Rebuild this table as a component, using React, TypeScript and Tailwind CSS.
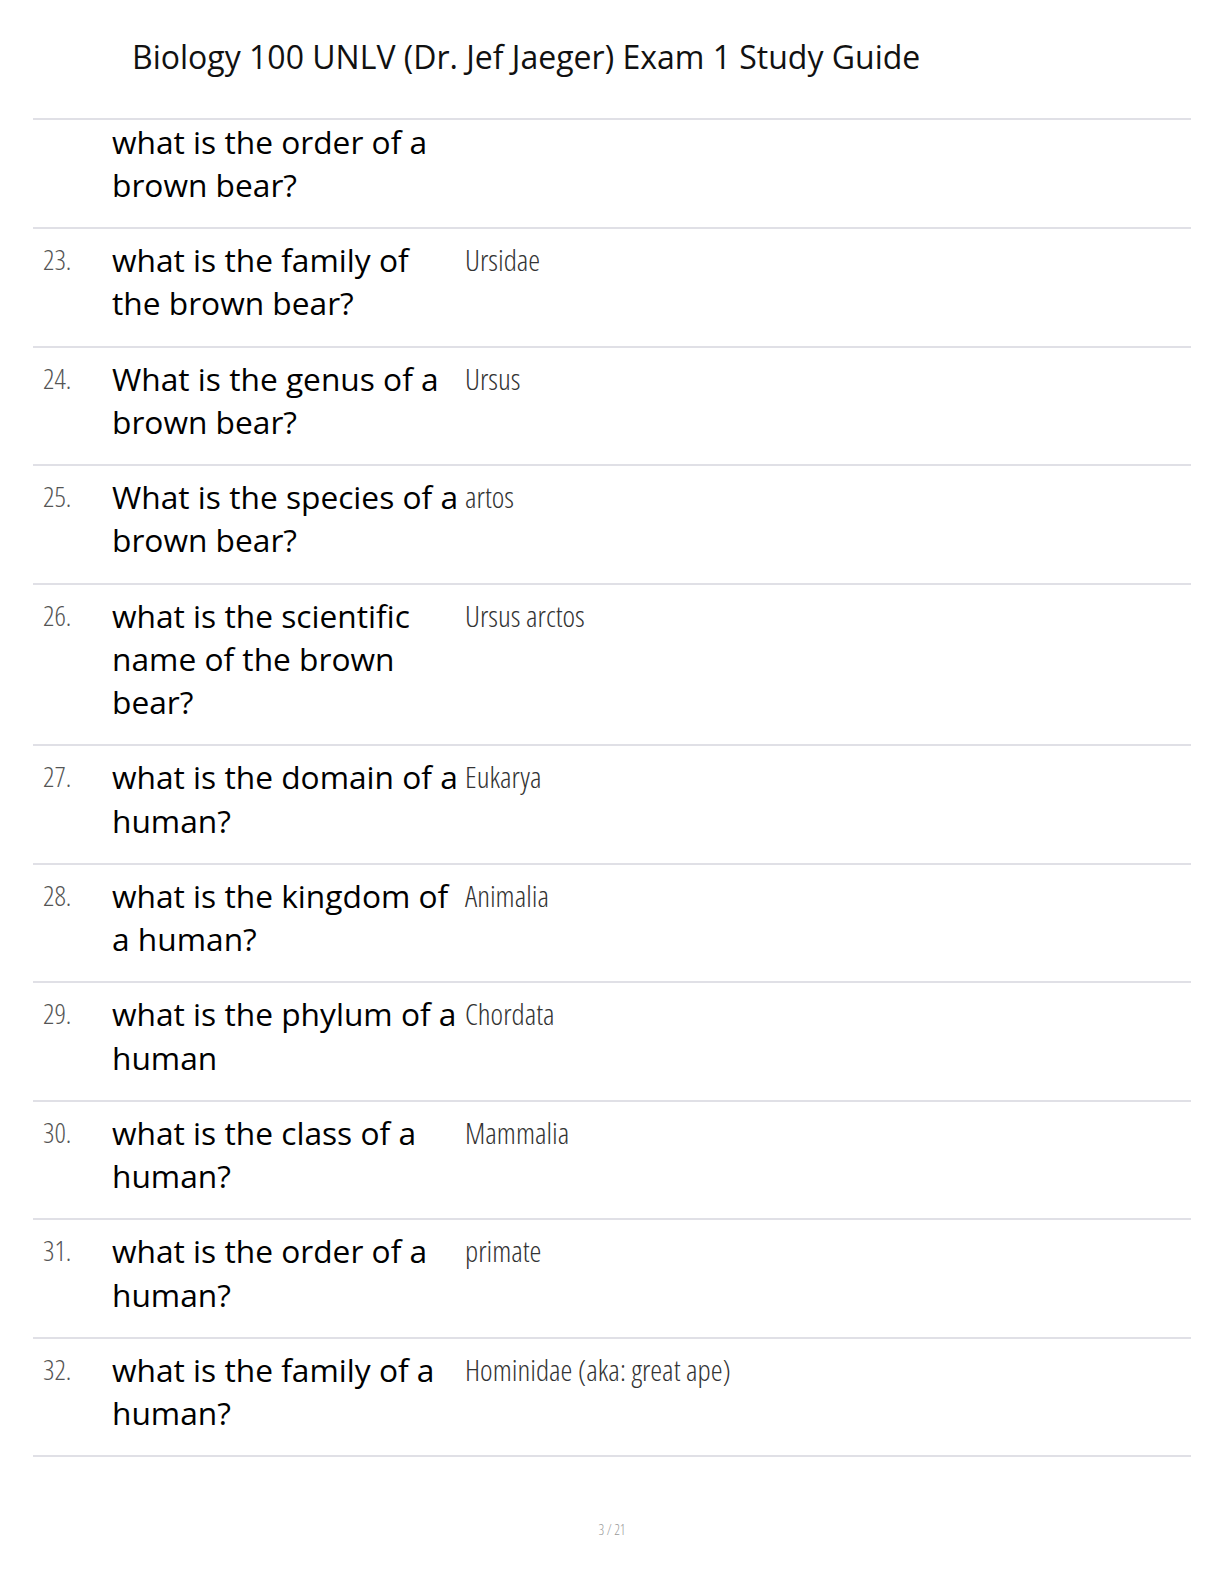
import React from "react";

const rows: { n?: string; q: string[]; a?: string }[] = [
  { q: ["what is the order of a", "brown bear?"] },
  { n: "23.", q: ["what is the family of", "the brown bear?"], a: "Ursidae" },
  { n: "24.", q: ["What is the genus of a", "brown bear?"], a: "Ursus" },
  { n: "25.", q: ["What is the species of a", "brown bear?"], a: "artos" },
  { n: "26.", q: ["what is the scientific", "name of the brown", "bear?"], a: "Ursus arctos" },
  { n: "27.", q: ["what is the domain of a", "human?"], a: "Eukarya" },
  { n: "28.", q: ["what is the kingdom of", "a human?"], a: "Animalia" },
  { n: "29.", q: ["what is the phylum of a", "human"], a: "Chordata" },
  { n: "30.", q: ["what is the class of a", "human?"], a: "Mammalia" },
  { n: "31.", q: ["what is the order of a", "human?"], a: "primate" },
  { n: "32.", q: ["what is the family of a", "human?"], a: "Hominidae (aka: great ape)" },
];

const cond = "font-['Open_Sans',sans-serif] font-light [font-stretch:75%]";

export default function App() {
  return (
    <div className="w-[1224px] h-[1584px] bg-white font-['Open_Sans',sans-serif] text-black relative">
      <div className="pt-[36px] pl-[132px] text-[32px] leading-[42px] text-[#111]">
        Biology 100 UNLV (Dr. Jef Jaeger) Exam 1 Study Guide
      </div>
      <div className="mx-[33px] mt-[40px] border-t-2 border-[#e0e0e6]">
        {rows.map((r, i) => (
          <div
            key={i}
            className={`flex border-b-2 border-[#e0e0e6] ${i === 0 ? "pt-0 pb-[21px] leading-[43px]" : "pt-[9px] pb-[21px] leading-[43.25px]"}`}
          >
            <div className={`w-[79px] pl-[10px] text-[28px] text-[#555] ${cond}`}>{r.n ?? ""}</div>
            <div className="w-[349px] text-[31.7px] text-black">
              {r.q.map((l, j) => (
                <div key={j} className="whitespace-nowrap">{l}</div>
              ))}
            </div>
            <div className={`pl-[4px] text-[30px] text-[#333] ${cond}`}>{r.a ?? ""}</div>
          </div>
        ))}
      </div>
      <div className={`absolute left-0 right-0 top-[1519px] text-center text-[14px] text-[#999] ${cond}`}>3 / 21</div>
    </div>
  );
}
